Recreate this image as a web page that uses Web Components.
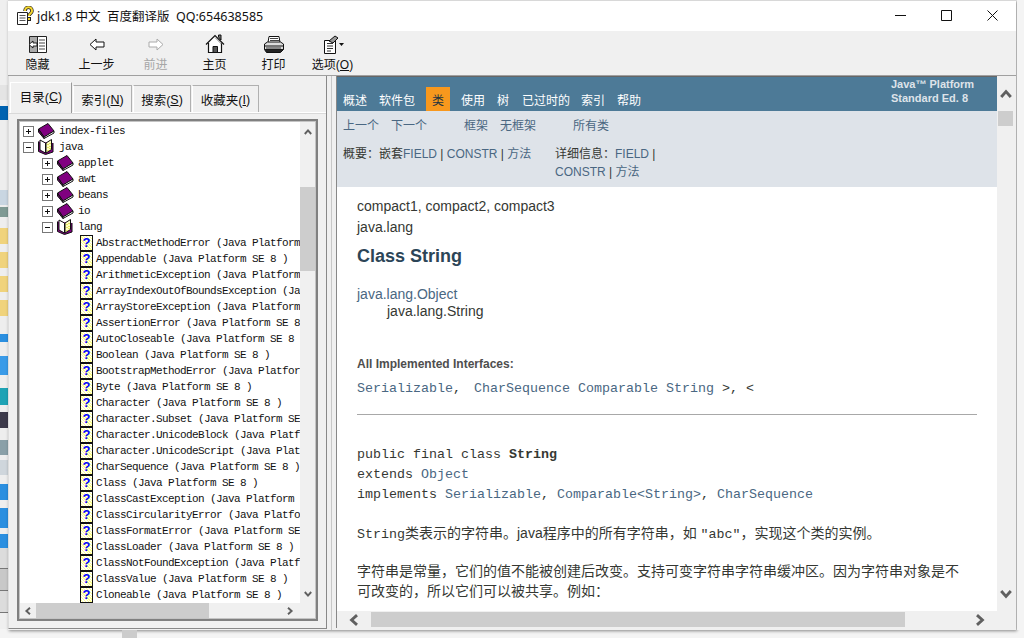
<!DOCTYPE html>
<html lang="zh">
<head>
<meta charset="utf-8">
<title>jdk1.8 中文</title>
<style>
  html, body { margin: 0; padding: 0; }
  body { width: 1024px; height: 638px; overflow: hidden; background: #f4f4f4; }
</style>
</head>
<body>
<desk-top>
  <help-window>
    <title-bar slot="title">jdk1.8 中文&nbsp; 百度翻译版&nbsp; QQ:654638585</title-bar>
    <tool-bar slot="tools">
      <tool-button icon="hide">隐藏</tool-button>
      <tool-button icon="back">上一步</tool-button>
      <tool-button icon="forward" disabled>前进</tool-button>
      <tool-button icon="home">主页</tool-button>
      <tool-button icon="print">打印</tool-button>
      <tool-button icon="options">选项(<u>O</u>)</tool-button>
    </tool-bar>
    <nav-panel slot="nav"></nav-panel>
    <doc-pane slot="doc"></doc-pane>
  </help-window>
</desk-top>

<script>
const FONT = `"Liberation Sans", "Noto Sans CJK SC", sans-serif`;
const MONO = `"Liberation Mono", "Noto Sans CJK SC", monospace`;

const ICONS = {
  hide: [20, 19, `<path d="M1.5 1.5h17v16h-17z" fill="#fff" stroke="#222"/><path d="M2 2h7v15H2z" fill="#aaa"/><path d="M9.5 1.5v16" stroke="#222"/><path d="M11 5h6M11 8h6M11 11h6M11 14h6" stroke="#444"/><path d="M1 9.500l4-3.500v2h4v3H5v2z" fill="#fff" stroke="#111" stroke-width=".9"/>`],
  back: [16, 13, `<path d="M1 6.500L7 1v3h8v5H7v3z" fill="#fff" stroke="#111"/>`],
  forward: [16, 13, `<path d="M15 6.500L9 1v3H1v5h8v3z" fill="#fff" stroke="#aaa"/>`],
  home: [20, 20, `<path d="M13.500 3V1h2.500v5z" fill="#777" stroke="#111"/><path d="M1 10.500L10 1.500l9 9" fill="#fff" stroke="#111" stroke-width="1.200"/><path d="M3.500 9v9.500h13V9" fill="#fff" stroke="#111" stroke-width="1.200"/><path d="M8 12.500h4.500v6H8z" fill="#555" stroke="#111"/><path d="M10 3.500l6.500 6.500" stroke="#888"/>`],
  print: [21, 19, `<path d="M6 1.500h10l1 6H5z" fill="#fff" stroke="#111"/><path d="M7 3.500h8M7 5.500h9" stroke="#444"/><path d="M1.500 9l3-2h13l3 2v5.500h-19z" fill="#ddd" stroke="#111"/><path d="M1.500 11h19" stroke="#111"/><path d="M3 13h15" stroke="#888" stroke-width="2"/><path d="M1.500 14.500l2 3h14l3-3" fill="#222" stroke="#111"/>`],
  options: [22, 19, `<path d="M2.500 5.500h11v13h-11z" fill="#fff" stroke="#111"/><path d="M5 8.500h6M5 11h6M5 13.500h6M5 16h4" stroke="#333"/><path d="M7 6l6-5 3 2-5 5z" fill="#999" stroke="#111"/><path d="M17 8h5l-2.500 3z" fill="#111"/>`],
  book: [18, 16, `<path d="M1.500 6L11 .5l6 7.500-10 6z" fill="#800080" stroke="#111"/><path d="M1.500 6L7 14v1.500L1.500 9z" fill="#5c005c" stroke="#111"/><path d="M7 14l10-6v2L7 15.500z" fill="#fff" stroke="#111"/>`],
  open: [18, 16, `<path d="M1.500 2.500v10l7 3 7.500-2.500V4" fill="#800080" stroke="#111"/><path d="M3 1l5.500 3v10L3 11z" fill="#fff" stroke="#111"/><path d="M9 4l5.500-3.500v10L9 14z" fill="#ffffc0" stroke="#111"/><path d="M11 5v1M13 4v1M11 8v1M13 7v1M11 11v1M13 9v1" stroke="#c8c800"/>`]
};

const svgOf = (name) => {
  const [w, h, body] = ICONS[name];
  return `<svg width="${w}" height="${h}" viewBox="0 0 ${w} ${h}">${body}</svg>`;
};

class DeskTop extends HTMLElement {
  constructor() {
    super();
    this.attachShadow({ mode: "open" });
    // the bits of other windows and desktop icons seen beside the help window
    const strip = [
      [85, "#efefef"], [15, "#e4e4e4"], [6, "#efefef"], [14, "#0063b1"], [70, "#eeeeee"],
      [15, "#c9d6e2"], [2, "#eee"], [10, "#7f9a94"], [11, "#eeeeee"], [16, "#f0d37c"], [8, "#eeeeee"],
      [16, "#f0d37c"], [8, "#eeeeee"], [16, "#f0d37c"], [8, "#eeeeee"], [16, "#f0d37c"], [18, "#eeeeee"],
      [8, "#2b8fe0"], [14, "#eee"], [19, "#3a9be8"], [13, "#eee"], [17, "#1fa3b5"], [7, "#eee"],
      [16, "#3c3a4a"], [12, "#eee"], [15, "#8aa0a8"], [5, "#eee"], [15, "#cfd6dc"], [9, "#eee"],
      [16, "#2b8fe0"], [8, "#eee"], [20, "#2b8fe0"], [6, "#eee"], [14, "#2b8fe0"], [20, "#dcdcdc"],
      [1, "#777"], [21, "#c8c8c8"], [1, "#777"], [21, "#dcdcdc"], [1, "#777"], [16, "#efefef"]
    ].map(([h, c]) => `<i style="height:${h}px;background:${c}"></i>`).join("");
    this.shadowRoot.innerHTML = `
      <style>
        :host { display: grid; grid-template-columns: 8px 1009px 7px; grid-template-rows: 630px 8px; width: 1024px; height: 638px; }
        .strip { display: flex; flex-direction: column; overflow: hidden; }
        .strip i { display: block; flex: none; }
        .under { grid-column: 1 / 4; padding-left: 122px; }
        .under i { display: block; width: 15px; height: 8px; background: #cccccc; }
        .side { background: #f4f4f4; }
        ::slotted(help-window) { box-shadow: 1px 1px 3px rgba(0,0,0,.45); }
      </style>
      <div class="strip">${strip}</div>
      <slot></slot>
      <div class="side"></div>
      <div class="under"><i></i></div>`;
  }
}

class HelpWindow extends HTMLElement {
  constructor() {
    super();
    this.attachShadow({ mode: "open" });
    this.shadowRoot.innerHTML = `
      <style>
        :host { display: flex; flex-direction: column; background: #f0f0f0; height: 630px; width: 1008px; overflow: hidden; }
        .main { flex: 1; display: flex; min-height: 0; border-top: 1px solid #a0a0a0; }
        .split { width: 9px; flex: none; background: #f0f0f0; box-sizing: border-box; padding-left: 4px; }
        .split i { display: block; width: 1px; height: 100%; background: #c8c8c8; }
      </style>
      <slot name="title"></slot>
      <slot name="tools"></slot>
      <div class="main">
        <slot name="nav"></slot>
        <div class="split"><i></i></div>
        <slot name="doc"></slot>
      </div>`;
  }
}

class TitleBar extends HTMLElement {
  constructor() {
    super();
    this.attachShadow({ mode: "open" });
    this.shadowRoot.innerHTML = `
      <style>
        :host { display: flex; align-items: center; height: 31px; flex: none; background: #fff; color: #111;
          font: 12.500px "Noto Sans", "Noto Sans CJK SC", sans-serif; padding-left: 8px; box-shadow: inset 0 1px 0 #d8d8d8; }
        .logo { margin-right: 3px; display: block; }
        .text { flex: 1; white-space: nowrap; }
        .ctl { width: 46px; display: flex; justify-content: center; align-items: center; height: 31px; }
        svg { display: block; }
      </style>
      <svg class="logo" width="18" height="19" viewBox="0 0 18 19">
        <path d="M1.500 6.500h10v12h-10z" fill="#fff" stroke="#222"/>
        <path d="M3.500 9.500h6M3.500 12h6M3.500 14.500h6" stroke="#555"/>
        <path d="M9 5c0-5 7-5 7 0 0 2.500-3 2.500-3 5" fill="none" stroke="#222" stroke-width="3.500"/>
        <path d="M9 5c0-5 7-5 7 0 0 2.500-3 2.500-3 5" fill="none" stroke="#f6d730" stroke-width="2"/>
        <rect x="11.500" y="11.500" width="3" height="3" fill="#f6d730" stroke="#222"/>
      </svg>
      <div class="text"><slot></slot></div>
      <div class="ctl"><svg width="11" height="11"><path d="M0 5.500h11" stroke="#111"/></svg></div>
      <div class="ctl"><svg width="11" height="11"><path d="M.5.500h10v10H.5z" fill="none" stroke="#111"/></svg></div>
      <div class="ctl" style="margin-right:1px"><svg width="11" height="11"><path d="M.5.500l10 10M10.500.500l-10 10" stroke="#111"/></svg></div>`;
  }
}

class ToolBar extends HTMLElement {
  constructor() {
    super();
    this.attachShadow({ mode: "open" });
    this.shadowRoot.innerHTML = `
      <style>
        :host { display: flex; height: 44px; flex: none; background: #f0f0f0; }
      </style>
      <slot></slot>`;
  }
}

class ToolButton extends HTMLElement {
  constructor() {
    super();
    this.attachShadow({ mode: "open" });
    const off = this.hasAttribute("disabled");
    this.shadowRoot.innerHTML = `
      <style>
        :host { display: flex; flex-direction: column; align-items: center; width: 59px; flex: none;
          font: 12px ${FONT}; color: ${off ? "#a6a6a6" : "#111"}; }
        .pic { height: 22px; margin-top: 2px; display: flex; align-items: center; justify-content: center; }
        .lbl { height: 16px; line-height: 16px; margin-top: 2px; white-space: nowrap; }
        svg { display: block; }
      </style>
      <div class="pic">${svgOf(this.getAttribute("icon"))}</div>
      <div class="lbl"><slot></slot></div>`;
  }
}

class ScrollBar extends HTMLElement {
  constructor() {
    super();
    this.attachShadow({ mode: "open" });
  }

  connectedCallback() {
    const v = this.getAttribute("orient") === "v";
    const num = (name, dflt) => Number(this.getAttribute(name) || dflt);
    const start = num("btn-start", 16), end = num("btn-end", 16);
    const offset = num("offset", 0), size = num("size", 40), arrow = num("arrow", 8);
    const inset = num("inset", 0);
    const rot = v ? ["0", "180"] : ["270", "90"];
    const chev = (r) => `<svg width="${arrow}" height="${arrow}" viewBox="0 0 10 10" style="transform:rotate(${r}deg)"><path d="M1 7.500L5 3l4 4.500" fill="none" stroke="#606060" stroke-width="2.400"/></svg>`;
    this.shadowRoot.innerHTML = `
      <style>
        :host { display: flex; flex-direction: ${v ? "column" : "row"}; background: #f0f0f0; box-sizing: border-box; flex: none; }
        .b { display: flex; align-items: center; justify-content: center; flex: none; }
        .track { flex: 1; min-width: 0; min-height: 0; padding: ${v ? `${offset}px ${inset}px 0` : `${inset}px 0 0 ${offset}px`}; box-sizing: border-box; }
        .thumb { background: #cdcdcd; ${v ? `height: ${size}px` : `width: ${size}px; height: 100%`}; }
        svg { display: block; }
      </style>
      <div class="b" style="${v ? "height" : "width"}:${start}px">${chev(rot[0])}</div>
      <div class="track" style="${v ? "" : `padding-bottom:${inset}px`}"><div class="thumb"></div></div>
      <div class="b" style="${v ? "height" : "width"}:${end}px">${chev(rot[1])}</div>`;
  }
}

class TreeRow extends HTMLElement {
  constructor() {
    super();
    this.attachShadow({ mode: "open" });
    const toggle = this.getAttribute("toggle");
    const icon = this.getAttribute("icon");
    const level = Number(this.getAttribute("level"));
    const left = [3, 22, 60][level];
    const pic = icon === "topic"
      ? `<span class="topic"></span>`
      : svgOf(icon);
    const sign = toggle
      ? `<span class="tog"><b class="h"></b>${toggle === "+" ? `<b class="v"></b>` : ""}</span>`
      : "";
    this.shadowRoot.innerHTML = `
      <style>
        :host { display: flex; align-items: center; height: 16px; white-space: nowrap; padding-left: ${left}px;
          font: 11px ${MONO}; letter-spacing: -.6px; color: #111; }
        .tog { position: relative; width: 9px; height: 9px; border: 1px solid #777; background: #fff; flex: none; margin-right: 3px; box-sizing: content-box; }
        .tog b { position: absolute; background: #111; }
        .h { left: 2px; right: 2px; top: 4px; height: 1px; }
        .v { top: 2px; bottom: 2px; left: 4px; width: 1px; }
        svg { display: block; flex: none; margin-right: 4px; }
        .topic { flex: none; width: 11px; height: 14px; margin: 0 3px 0 0; border: 1px solid #111;
          background: repeating-linear-gradient(45deg, #fff 0 1px, #ffff90 1px 2px);
          display: flex; align-items: center; justify-content: center;
          font: bold 13px/14px "Liberation Sans", sans-serif; color: #0000ff; letter-spacing: 0; }
        .topic::after { content: "?"; }
        .t { display: block; }
      </style>
      ${sign}${pic}<span class="t"><slot></slot></span>`;
  }
}

const TOPICS = [
  "AbstractMethodError", "Appendable", "ArithmeticException", "ArrayIndexOutOfBoundsException",
  "ArrayStoreException", "AssertionError", "AutoCloseable", "Boolean", "BootstrapMethodError",
  "Byte", "Character", "Character.Subset", "Character.UnicodeBlock", "Character.UnicodeScript",
  "CharSequence", "Class", "ClassCastException", "ClassCircularityError", "ClassFormatError",
  "ClassLoader", "ClassNotFoundException", "ClassValue", "Cloneable"
];

class TocTree extends HTMLElement {
  constructor() {
    super();
    this.attachShadow({ mode: "open" });
    const row = (level, toggle, icon, text) =>
      `<tree-row level="${level}" ${toggle ? `toggle="${toggle}"` : ""} icon="${icon}">${text}</tree-row>`;
    const rows = [
      row(0, "+", "book", "index-files"),
      row(0, "-", "open", "java"),
      row(1, "+", "book", "applet"),
      row(1, "+", "book", "awt"),
      row(1, "+", "book", "beans"),
      row(1, "+", "book", "io"),
      row(1, "-", "open", "lang"),
      // names past the tree's right edge are never seen, so stop them just beyond it
      ...TOPICS.map((t) => row(2, "", "topic", `${t} (Java Platform SE 8 )`.slice(0, 36)))
    ].join("");
    this.shadowRoot.innerHTML = `
      <style>
        :host { display: grid; grid-template-columns: 1fr 15px; grid-template-rows: 1fr 15px; box-sizing: border-box;
          width: 301px; height: 502px; border: 2px solid #808080; outline: 1px solid #c4c4c4; outline-offset: -3px; padding: 1px; background: #fff; }
        .list { overflow: hidden; background: #fff; min-width: 0; min-height: 0; padding-top: 1px; box-sizing: border-box; }
        .corner { background: #f0f0f0; }
      </style>
      <div class="list">${rows}</div>
      <scroll-bar orient="v" btn-start="19" btn-end="19" offset="46" size="84"></scroll-bar>
      <scroll-bar orient="h" btn-start="16" btn-end="20" offset="0" size="173"></scroll-bar>
      <div class="corner"></div>`;
  }
}

class NavTabs extends HTMLElement {
  constructor() {
    super();
    this.attachShadow({ mode: "open" });
    const tabs = [["目录", "C", 62], ["索引", "N", 59], ["搜索", "S", 58], ["收藏夹", "I", 67]];
    this.shadowRoot.innerHTML = `
      <style>
        :host { display: flex; align-items: flex-end; height: 37px; padding-left: 1px; font: 12.500px ${FONT}; color: #111; flex: none; box-sizing: border-box; border-bottom: 1px solid #fff; box-shadow: 0 1px 0 #d9d9d9; }
        .tab { box-sizing: border-box; height: 27px; border: 1px solid #b0b0b0; border-bottom: 0; border-left-color: #fff; margin-right: 1px;
          display: flex; align-items: center; justify-content: center; white-space: nowrap; padding-top: 1px; background: #f0f0f0; }
        .on { height: 31px; border-color: #fff; border-right-color: #999; background: #f0f0f0; padding: 0 0 3px; margin-bottom: -1px; }
      </style>
      ${tabs.map(([t, k, w], i) => `<div class="tab ${i === 0 ? "on" : ""}" style="width:${w}px">${t}(<u>${k}</u>)</div>`).join("")}`;
  }
}

class NavPanel extends HTMLElement {
  constructor() {
    super();
    this.attachShadow({ mode: "open" });
    this.shadowRoot.innerHTML = `
      <style>
        :host { display: flex; flex-direction: column; width: 319px; flex: none; box-sizing: border-box;
          background: #f0f0f0; border-right: 1px solid #888; border-bottom: 1px solid #888; border-left: 1px solid #ddd; height: 553px; }
        toc-tree { margin: 6px 0 0 8px; }
      </style>
      <nav-tabs></nav-tabs>
      <toc-tree></toc-tree>`;
  }
}

class DocHeader extends HTMLElement {
  constructor() {
    super();
    this.attachShadow({ mode: "open" });
    const top = [["概述", 343], ["软件包", 379], ["类", 426], ["使用", 461], ["树", 497], ["已过时的", 522], ["索引", 581], ["帮助", 617]];
    let x = 337;
    const widths = { "概述": 24, "软件包": 36, "类": 24, "使用": 24, "树": 12, "已过时的": 48, "索引": 24, "帮助": 24 };
    const items = top.map(([t, at]) => {
      const gap = at - x;
      x = at + widths[t];
      return `<span class="${t === "类" ? "cur" : "it"}" style="margin-left:${gap}px">${t}</span>`;
    }).join("");
    this.shadowRoot.innerHTML = `
      <style>
        :host { display: block; font: 12px ${FONT}; color: #353833; flex: none; }
        .top { position: relative; height: 35px; box-sizing: border-box; border-top: 1px solid #666; background: #4d7a97; color: #fff; display: flex; align-items: flex-end; white-space: nowrap; }
        .it { height: 24px; padding-top: 4px; box-sizing: border-box; line-height: 20px; display: block; }
        .cur { width: 24px; height: 24px; padding-top: 4px; box-sizing: border-box; line-height: 20px; text-align: center; background: #f8981d; color: #253441; display: block; }
        .about { position: absolute; top: 0; left: 554px; color: #dee3e9; font: bold 11px/14px ${FONT}; }
        .sub { height: 76px; background: #dee3e9; box-sizing: border-box; padding: 7px 0 0 6px; }
        .links { display: flex; height: 16px; line-height: 16px; color: #4a6782; }
        .links span:nth-child(2) { margin-left: 12px; }
        .links span:nth-child(3) { margin-left: 37px; }
        .links span:nth-child(4) { margin-left: 12px; }
        .links span:nth-child(5) { margin-left: 37px; }
        .meta { display: flex; margin-top: 11px; line-height: 18px; }
        .meta div:first-child { width: 212px; flex: none; }
        .meta div:last-child { width: 110px; }
        .meta a { color: #4a6782; }
      </style>
      <div class="top">${items}<div class="about">Java™ Platform<br>Standard Ed. 8</div></div>
      <div class="sub">
        <div class="links"><span>上一个</span><span>下一个</span><span>框架</span><span>无框架</span><span>所有类</span></div>
        <div class="meta">
          <div>概要&#xFF1A;嵌套<a>FIELD</a> | <a>CONSTR</a> | <a>方法</a></div>
          <div>详细信息&#xFF1A;<a>FIELD</a> | <a>CONSTR</a> | <a>方法</a></div>
        </div>
      </div>`;
  }
}

class DocBody extends HTMLElement {
  constructor() {
    super();
    this.attachShadow({ mode: "open" });
    this.shadowRoot.innerHTML = `
      <style>
        :host { display: block; flex: 1; min-height: 0; overflow: hidden; background: #fff; padding: 9px 20px 0 20px; box-sizing: border-box;
          font: 14px ${FONT}; color: #353833; white-space: nowrap; }
        a { color: #4a6782; }
        code, pre { font: 13.330px/20px ${MONO}; }
        .line { height: 21px; line-height: 21px; }
        h2 { margin: 6px 0 0; font: bold 18px/24px ${FONT}; color: #2c4557; }
        .tree { margin-top: 18px; line-height: 17px; }
        .ind { padding-left: 30px; }
        .lab { margin-top: 36px; font: bold 12px/16px ${FONT}; color: #4e4e4e; }
        .impl { margin-top: 6px; height: 18px; line-height: 18px; }
        .impl .gap { margin-left: 5px; }
        hr { border: 0; height: 1px; background: #a8a8a8; margin: 18px 0 0; }
        pre { margin: 30px 0 0; }
        p { margin: 0; line-height: 20px; }
        .p1 { margin-top: 18px; }
        .p2 { margin-top: 16px; }
      </style>
      <div class="line">compact1, compact2, compact3</div>
      <div class="line">java.lang</div>
      <h2>Class String</h2>
      <div class="tree"><a>java.lang.Object</a></div>
      <div class="tree ind" style="margin-top:0">java.lang.String</div>
      <div class="lab">All Implemented Interfaces:</div>
      <div class="impl"><code><a>Serializable</a>, <a class="gap">CharSequence</a> <a>Comparable</a> <a>String</a> &gt;, &lt;</code></div>
      <hr>
      <pre>public final class <b>String</b>
extends <a>Object</a>
implements <a>Serializable</a>, <a>Comparable</a><a>&lt;String&gt;</a>, <a>CharSequence</a></pre>
      <p class="p1"><code>String</code>类表示的字符串。java程序中的所有字符串&#xFF0C;如 <code>"abc"</code>&#xFF0C;实现这个类的实例。</p>
      <p class="p2">字符串是常量&#xFF0C;它们的值不能被创建后改变。支持可变字符串字符串缓冲区。因为字符串对象是不<br>可改变的&#xFF0C;所以它们可以被共享。例如&#xFF1A;</p>`;
  }
}

class DocPane extends HTMLElement {
  constructor() {
    super();
    this.attachShadow({ mode: "open" });
    this.shadowRoot.innerHTML = `
      <style>
        :host { display: grid; grid-template-columns: 661px 17px; grid-template-rows: 535px 17px; width: 678px; flex: none; align-content: start; background: #f0f0f0; }
        .col { display: flex; flex-direction: column; min-height: 0; border-left: 1px solid #888; }
        .bar { border-left: 1px solid #888; }
        .corner { background: #f0f0f0; }
      </style>
      <div class="col"><doc-header></doc-header><doc-body></doc-body></div>
      <scroll-bar orient="v" btn-start="35" btn-end="34" offset="0" size="15" arrow="12" inset="1"></scroll-bar>
      <scroll-bar class="bar" orient="h" btn-start="34" btn-end="34" offset="0" size="534" arrow="12" inset="1"></scroll-bar>
      <div class="corner"></div>`;
  }
}

customElements.define("desk-top", DeskTop);
customElements.define("help-window", HelpWindow);
customElements.define("title-bar", TitleBar);
customElements.define("tool-bar", ToolBar);
customElements.define("tool-button", ToolButton);
customElements.define("scroll-bar", ScrollBar);
customElements.define("tree-row", TreeRow);
customElements.define("toc-tree", TocTree);
customElements.define("nav-tabs", NavTabs);
customElements.define("nav-panel", NavPanel);
customElements.define("doc-header", DocHeader);
customElements.define("doc-body", DocBody);
customElements.define("doc-pane", DocPane);
</script>
</body>
</html>
